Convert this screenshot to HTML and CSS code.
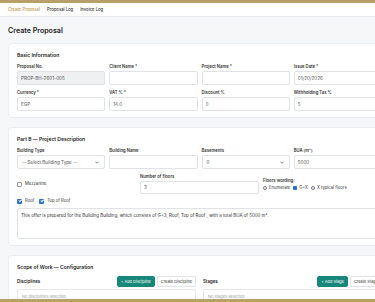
FILE: index.html
```html
<!DOCTYPE html>
<html lang="en">
<head>
  <meta charset="UTF-8">
  <meta name="viewport" content="width=device-width, initial-scale=1.0">
  <title>Create Proposal</title>
  <link rel="stylesheet" href="styles.css">
</head>
<body>

  <header class="topbar">
    <nav class="nav">
      <a href="#" class="nav-link active">Create Proposal</a>
      <a href="#" class="nav-link">Proposal Log</a>
      <a href="#" class="nav-link">Invoice Log</a>
    </nav>
  </header>

  <main class="page">
    <h1>Create Proposal</h1>

    <!-- Basic information -->
    <section class="card">
      <h2>Basic Information</h2>
      <div class="grid-4">
        <div class="field">
          <label>Proposal No.</label>
          <input class="input readonly" type="text" value="PROP-BH-2601-005" readonly>
        </div>
        <div class="field">
          <label>Client Name *</label>
          <input class="input" type="text">
        </div>
        <div class="field">
          <label>Project Name *</label>
          <input class="input" type="text">
        </div>
        <div class="field">
          <label>Issue Date *</label>
          <input class="input" type="text" value="01/20/2026">
        </div>
        <div class="field">
          <label>Currency *</label>
          <input class="input" type="text" value="EGP">
        </div>
        <div class="field">
          <label>VAT % *</label>
          <input class="input" type="text" value="14.0">
        </div>
        <div class="field">
          <label>Discount %</label>
          <input class="input" type="text" value="0">
        </div>
        <div class="field">
          <label>Withholding Tax %</label>
          <input class="input" type="text" value="5">
        </div>
      </div>
    </section>

    <!-- Part B -->
    <section class="card">
      <h2>Part B — Project Description</h2>
      <div class="grid-4">
        <div class="field">
          <label>Building Type</label>
          <div class="select">
            <span>-- Select Building Type --</span>
            <svg class="caret" viewBox="0 0 10 6" width="4" height="3"><path d="M1 1l4 4 4-4" fill="none" stroke="#444" stroke-width="1.6"/></svg>
          </div>
        </div>
        <div class="field">
          <label>Building Name</label>
          <input class="input" type="text">
        </div>
        <div class="field">
          <label>Basements</label>
          <div class="select">
            <span>0</span>
            <svg class="caret" viewBox="0 0 10 6" width="4" height="3"><path d="M1 1l4 4 4-4" fill="none" stroke="#444" stroke-width="1.6"/></svg>
          </div>
        </div>
        <div class="field">
          <label>BUA (m²)</label>
          <input class="input" type="text" value="5000">
        </div>
      </div>

      <div class="grid-3">
        <div class="check"><span class="box"></span>Mezzanine</div>
        <div class="field">
          <label>Number of floors</label>
          <input class="input" type="text" value="3">
        </div>
        <div class="field">
          <label>Floors wording:</label>
          <div class="radios">
            <span class="radio"><span class="dot"></span>Enumerate</span>
            <span class="radio"><span class="dot on"></span>G+X</span>
            <span class="radio"><span class="dot"></span>X typical floors</span>
          </div>
        </div>
      </div>

      <div class="checks">
        <div class="check"><span class="box on"></span>Roof</div>
        <div class="check"><span class="box on"></span>Top of Roof</div>
      </div>

      <div class="textarea">This offer is prepared for the Building Building, which consists of G+3, Roof, Top of Roof , with a total BUA of 5000 m².</div>
    </section>

    <!-- Scope -->
    <section class="card">
      <h2>Scope of Work — Configuration</h2>
      <div class="grid-2">
        <div>
          <div class="list-head">
            <span class="list-title">Disciplines</span>
            <button class="btn btn-primary">+ Add Discipline</button>
            <button class="btn btn-outline">Create Discipline</button>
          </div>
          <div class="list-box">No disciplines selected</div>
        </div>
        <div>
          <div class="list-head">
            <span class="list-title">Stages</span>
            <button class="btn btn-primary">+ Add Stage</button>
            <button class="btn btn-outline">Create Stage</button>
          </div>
          <div class="list-box">No stages selected</div>
        </div>
      </div>
    </section>
  </main>

  <div class="footer-bar"></div>

</body>
</html>
```

FILE: styles.css
```css
html, body {
  overflow: hidden;
}

body {
  margin: 0;
  background-color: #f6f7f9;
  font-family: 'Inter', 'Noto Sans', sans-serif;
  color: #222;
}

.topbar {
  border-top: 3px solid #b9a06a;
  background-color: #fff;
  border-bottom: 1px solid #e6e8eb;
}

.nav {
  display: flex;
  gap: 7px;
  height: 13px;
  align-items: center;
  padding: 0 8px;
}

.nav-link {
  font-size: 4.2px;
  font-weight: 500;
  color: #333;
  text-decoration: none;
}

.nav-link.active {
  color: #b9994f;
}

.page {
  padding: 0 8px;
  width: 383px;
}

h1 {
  font-size: 7.1px;
  font-weight: 600;
  line-height: 12px;
  margin: 8px 0 6px;
  color: #222;
}

.card {
  background-color: #fff;
  border: 1px solid #eceef1;
  border-radius: 4px;
  padding: 8px 8px 6px;
  margin-bottom: 9px;
}

h2 {
  font-size: 5px;
  font-weight: 600;
  line-height: 7px;
  margin: 0 0 5px;
  color: #222;
}

.grid-4 {
  display: grid;
  grid-template-columns: repeat(4, 1fr);
  column-gap: 4px;
  row-gap: 5px;
}

.grid-3 {
  display: grid;
  grid-template-columns: repeat(3, 1fr);
  column-gap: 4px;
  align-items: center;
  margin-top: 5px;
}

.grid-2 {
  display: grid;
  grid-template-columns: repeat(2, 1fr);
  column-gap: 7px;
}

.field {
  display: flex;
  flex-direction: column;
}

label {
  font-size: 4.2px;
  font-weight: 600;
  line-height: 6px;
  margin-bottom: 1px;
  color: #333;
}

.input,
.select {
  box-sizing: border-box;
  height: 14px;
  border: 1px solid #dfe2e6;
  border-radius: 2px;
  padding: 0 3px;
  font-family: inherit;
  font-size: 4.6px;
  color: #555;
  background-color: #fff;
  outline: none;
  width: 100%;
  margin: 0;
}

.input.readonly {
  background-color: #eef0f2;
}

.select {
  display: flex;
  align-items: center;
  justify-content: space-between;
  padding: 0 5px 0 4px;
}

.grid-3 .input {
  height: 13px;
}

.caret {
  display: block;
}

.radios {
  display: flex;
  gap: 3px;
  align-items: center;
  line-height: 6px;
}

.radio,
.check {
  display: flex;
  align-items: center;
  gap: 2px;
  font-size: 4.2px;
  color: #333;
  line-height: 6px;
}

.dot {
  box-sizing: border-box;
  width: 4px;
  height: 4px;
  border: 0.7px solid #777;
  border-radius: 50%;
}

.dot.on {
  border: none;
  border-radius: 1px;
  background-color: #2b6fd6;
}

.box {
  box-sizing: border-box;
  width: 5px;
  height: 5px;
  border: 1px solid #9a9a9a;
  border-radius: 1px;
  margin-right: 1px;
}

.box.on {
  border: none;
  background-color: #2b6fd6;
  position: relative;
}

.box.on::after {
  content: '';
  position: absolute;
  left: 1.6px;
  top: 0.6px;
  width: 1.2px;
  height: 2.4px;
  border: solid #fff;
  border-width: 0 0.7px 0.7px 0;
  transform: rotate(45deg);
}

.checks {
  display: flex;
  gap: 5px;
  margin-top: 4px;
}

.textarea {
  box-sizing: border-box;
  height: 31px;
  margin-top: 4px;
  border: 1px solid #dfe2e6;
  border-radius: 2px;
  padding: 4px 3px;
  font-size: 4.45px;
  line-height: 6px;
  color: #333;
  white-space: nowrap;
}

.list-head {
  display: flex;
  align-items: center;
  gap: 2px;
}

.list-title {
  flex: 1;
  font-size: 4.4px;
  font-weight: 600;
  color: #222;
}

.btn {
  height: 11px;
  padding: 0 3px;
  font-family: inherit;
  font-size: 3.9px;
  border-radius: 2px;
  cursor: pointer;
}

.btn-primary {
  background-color: #17877a;
  border: 1px solid #17877a;
  color: #fff;
}

.btn-outline {
  background-color: #fff;
  border: 1px solid #dfe2e6;
  color: #333;
}

.list-box {
  margin-top: 2px;
  height: 20px;
  border: 1px solid #e6e8eb;
  border-radius: 2px;
  padding: 4px 4px;
  box-sizing: border-box;
  font-size: 4px;
  color: #999;
}

.footer-bar {
  position: fixed;
  left: 0;
  right: 0;
  bottom: 0;
  height: 3px;
  background-color: #b9a06a;
}
```
